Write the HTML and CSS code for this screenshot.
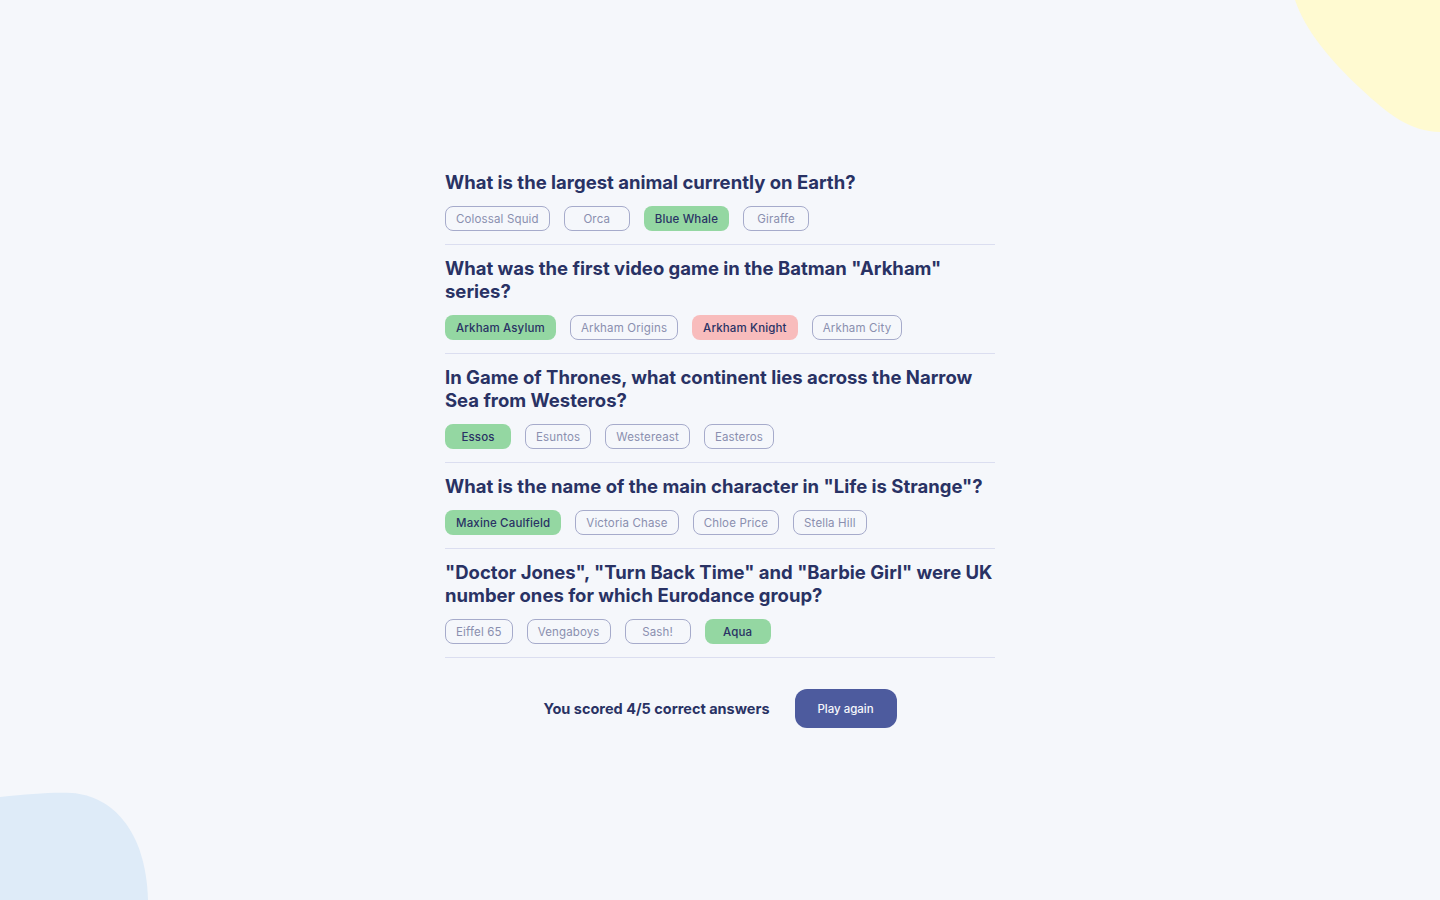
FILE: index.html
```html
<!DOCTYPE html>
<html lang="en">
<head>
<meta charset="utf-8">
<title>Quizzical</title>
<link rel="stylesheet" href="styles.css">
</head>
<body>
<svg class="blob blob-yellow" width="146" height="134" viewBox="1294 0 146 134" aria-hidden="true"><path d="M1295,0 C1305,30 1330,60 1360,88 C1390,116 1410,131 1440,132 L1440,0 Z" fill="#FFFAD1"/></svg>
<svg class="blob blob-blue" width="150" height="110" viewBox="0 790 150 110" aria-hidden="true"><path d="M0,797 C30,794 52,792 72,793 C112,796 146,830 148,900 L0,900 Z" fill="#DEEBF8"/></svg>

<main class="quiz">
  <section class="question">
    <h2 class="q-title">What is the largest animal currently on Earth?</h2>
    <div class="answers">
      <span class="answer dim">Colossal Squid</span>
      <span class="answer dim">Orca</span>
      <span class="answer correct">Blue Whale</span>
      <span class="answer dim">Giraffe</span>
    </div>
  </section>
  <section class="question">
    <h2 class="q-title">What was the first video game in the Batman "Arkham" series?</h2>
    <div class="answers">
      <span class="answer correct">Arkham Asylum</span>
      <span class="answer dim">Arkham Origins</span>
      <span class="answer wrong">Arkham Knight</span>
      <span class="answer dim">Arkham City</span>
    </div>
  </section>
  <section class="question">
    <h2 class="q-title">In Game of Thrones, what continent lies across the Narrow Sea from Westeros?</h2>
    <div class="answers">
      <span class="answer correct">Essos</span>
      <span class="answer dim">Esuntos</span>
      <span class="answer dim">Westereast</span>
      <span class="answer dim">Easteros</span>
    </div>
  </section>
  <section class="question">
    <h2 class="q-title">What is the name of the main character in "Life is Strange"?</h2>
    <div class="answers">
      <span class="answer correct">Maxine Caulfield</span>
      <span class="answer dim">Victoria Chase</span>
      <span class="answer dim">Chloe Price</span>
      <span class="answer dim">Stella Hill</span>
    </div>
  </section>
  <section class="question">
    <h2 class="q-title">"Doctor Jones", "Turn Back Time" and "Barbie Girl" were UK number ones for which Eurodance group?</h2>
    <div class="answers">
      <span class="answer dim">Eiffel 65</span>
      <span class="answer dim">Vengaboys</span>
      <span class="answer dim">Sash!</span>
      <span class="answer correct">Aqua</span>
    </div>
  </section>
  <footer class="result">
    <p class="score">You scored 4/5 correct answers</p>
    <button class="play-btn" type="button">Play again</button>
  </footer>
</main>
</body>
</html>
```
FILE: styles.css
```css
* { box-sizing: border-box; }
html, body { margin: 0; padding: 0; }
body {
  min-height: 100vh;
  background: #F5F7FB;
  font-family: "Inter", "Liberation Sans", sans-serif;
  color: #293264;
  display: flex;
  align-items: center;
  justify-content: center;
  overflow: hidden;
  position: relative;
}
.blob { position: absolute; display: block; }
.blob-yellow { top: 0; right: 0; }
.blob-blue { bottom: 0; left: 0; }

.quiz {
  width: 550px;
  display: flex;
  flex-direction: column;
  padding-bottom: 13px;
  position: relative;
  z-index: 1;
}
.question {
  padding: 12px 0 13px;
  border-bottom: 1px solid #DBDEF0;
}
.q-title {
  margin: 0 0 12px;
  font-size: 18.5px;
  line-height: 23px;
  font-weight: 700;
  letter-spacing: 0;
  color: #293264;
}
.answers {
  display: flex;
  gap: 14px;
}
.answer {
  display: inline-flex;
  align-items: center;
  justify-content: center;
  height: 25px;
  min-width: 66px;
  padding: 0 10px;
  border-radius: 8px;
  font-size: 11.5px;
  letter-spacing: 0.15px;
  font-weight: 500;
  color: #293264;
  border: 1px solid transparent;
}
.answer.dim {
  border-color: #A6ABCB;
  color: #8A8FAF;
  font-weight: 400;
}
.answer.correct { background: #94D7A2; }
.answer.wrong { background: #F8BCBC; }

.result {
  display: flex;
  align-items: center;
  justify-content: center;
  gap: 25px;
  margin-top: 31px;
}
.score {
  margin: 0;
  font-size: 14.5px;
  font-weight: 700;
  color: #293264;
}
.play-btn {
  width: 102px;
  height: 39px;
  border: none;
  border-radius: 12px;
  background: #4D5B9E;
  color: #F5F7FB;
  font-family: inherit;
  font-size: 11.5px;
  font-weight: 500;
}
```
